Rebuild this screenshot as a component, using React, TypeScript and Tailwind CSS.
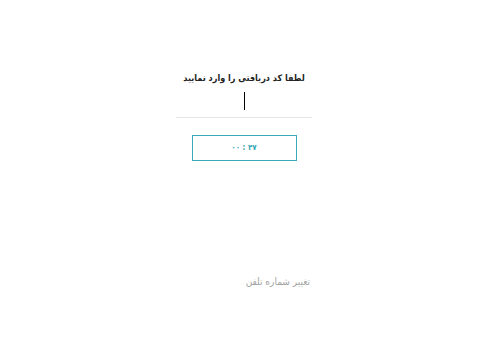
export default function App() {
  return (
    <div
      dir="rtl"
      className="w-[500px] h-[350px] bg-white relative"
      style={{ fontFamily: '"DejaVu Sans Condensed", "DejaVu Sans", sans-serif' }}
    >
      <div className="absolute left-[176px] top-[68px] w-[136px] flex flex-col items-center">
        {/* title */}
        <p className="text-[9px] font-bold text-[#222] leading-[20px] whitespace-nowrap">
          لطفا کد دریافتی را وارد نمایید
        </p>

        {/* code input */}
        <div className="w-full h-[30px] border-b border-[#e6e6e6] flex justify-center pt-[4px]">
          <div className="w-[1px] h-[18px] bg-black" />
        </div>

        {/* timer */}
        <div className="mt-[17px] w-[105px] h-[26px] border border-[#3aaab9] flex items-center justify-center">
          <span dir="ltr" className="text-[8px] font-bold text-[#3aaab9] tracking-wide">
            ۰۰ : ۴۷
          </span>
        </div>

        {/* change phone */}
        <div className="w-full mt-[107px] pr-[2px]">
          <span className="text-[10px] text-[#a3a3a3]">تغییر شماره تلفن</span>
        </div>
      </div>
    </div>
  );
}
